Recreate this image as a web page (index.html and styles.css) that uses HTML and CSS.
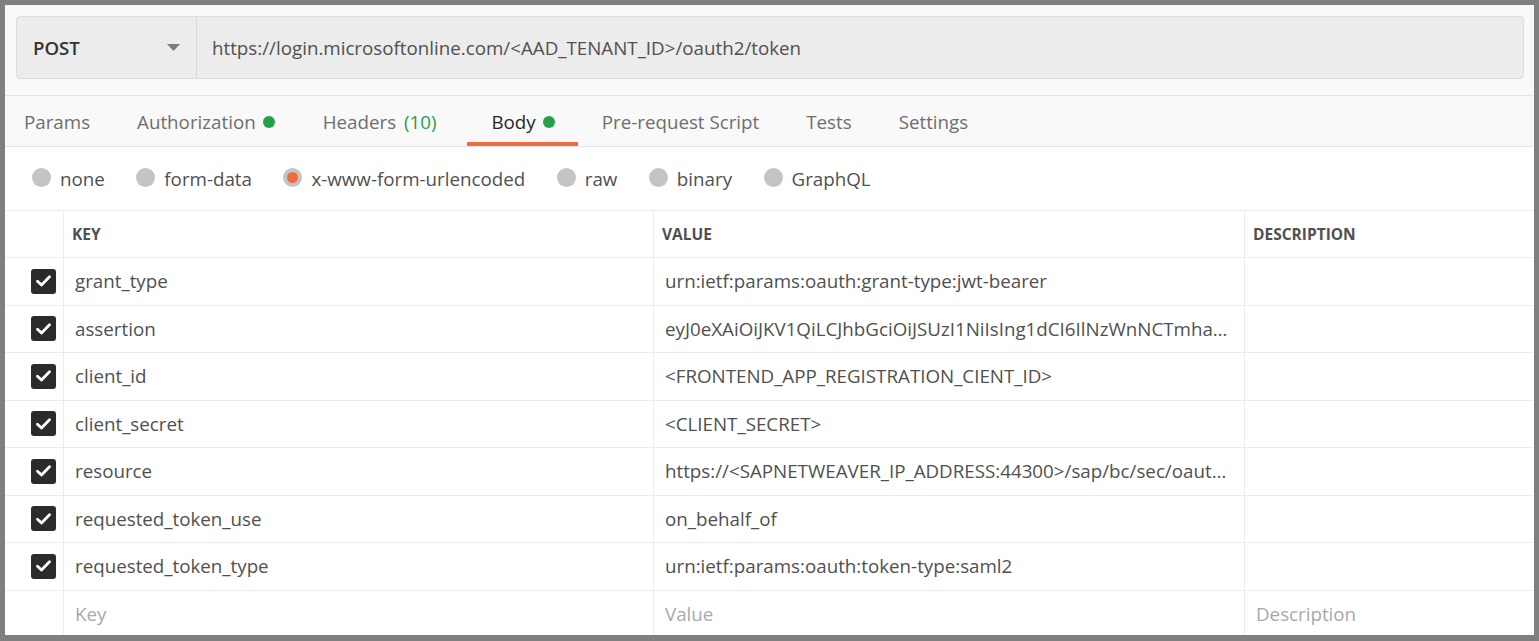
FILE: index.html
```html
<!DOCTYPE html>
<html>
<head>
<meta charset="utf-8">
<link rel="stylesheet" href="styles.css">
</head>
<body>
<div class="window">
  <div class="top">
    <div class="urlbar">
      <div class="method">
        <span class="method-name">POST</span>
        <svg class="caret" width="13" height="7" viewBox="0 0 13 7"><path d="M0 0H13L6.5 7Z" fill="#7b7b7b"/></svg>
      </div>
      <div class="url">https://login.microsoftonline.com/&lt;AAD_TENANT_ID&gt;/oauth2/token</div>
    </div>
  </div>
  <div class="tabs">
    <div class="tab">Params</div>
    <div class="tab">Authorization<span class="dot"></span></div>
    <div class="tab tab-headers">Headers <span class="count">(10)</span></div>
    <div class="tab active">Body<span class="dot"></span></div>
    <div class="tab">Pre-request Script</div>
    <div class="tab">Tests</div>
    <div class="tab">Settings</div>
  </div>
  <div class="radios">
    <label class="radio"><span class="circle"></span>none</label>
    <label class="radio"><span class="circle"></span>form-data</label>
    <label class="radio"><span class="circle selected"></span>x-www-form-urlencoded</label>
    <label class="radio"><span class="circle"></span>raw</label>
    <label class="radio"><span class="circle"></span>binary</label>
    <label class="radio"><span class="circle"></span>GraphQL</label>
  </div>
  <div class="table">
    <div class="row head">
      <div class="cell chk"></div>
      <div class="cell">KEY</div>
      <div class="cell">VALUE</div>
      <div class="cell">DESCRIPTION</div>
    </div>
    <div class="row">
      <div class="cell chk"><span class="box"><svg width="15" height="12" viewBox="0 0 15 12"><path d="M1.5 6.2L5.5 10L13.5 1.8" fill="none" stroke="#fff" stroke-width="2.8" stroke-linecap="round" stroke-linejoin="round"/></svg></span></div>
      <div class="cell">grant_type</div>
      <div class="cell">urn:ietf:params:oauth:grant-type:jwt-bearer</div>
      <div class="cell"></div>
    </div>
    <div class="row">
      <div class="cell chk"><span class="box"><svg width="15" height="12" viewBox="0 0 15 12"><path d="M1.5 6.2L5.5 10L13.5 1.8" fill="none" stroke="#fff" stroke-width="2.8" stroke-linecap="round" stroke-linejoin="round"/></svg></span></div>
      <div class="cell">assertion</div>
      <div class="cell">eyJ0eXAiOiJKV1QiLCJhbGciOiJSUzI1NiIsIng1dCI6IlNzWnNCTmhaTmNfMkdNbjY0clhzQXlDUVlSVSIsImtpZCI6IlNzWnNCTmhaY</div>
      <div class="cell"></div>
    </div>
    <div class="row">
      <div class="cell chk"><span class="box"><svg width="15" height="12" viewBox="0 0 15 12"><path d="M1.5 6.2L5.5 10L13.5 1.8" fill="none" stroke="#fff" stroke-width="2.8" stroke-linecap="round" stroke-linejoin="round"/></svg></span></div>
      <div class="cell">client_id</div>
      <div class="cell">&lt;FRONTEND_APP_REGISTRATION_CIENT_ID&gt;</div>
      <div class="cell"></div>
    </div>
    <div class="row">
      <div class="cell chk"><span class="box"><svg width="15" height="12" viewBox="0 0 15 12"><path d="M1.5 6.2L5.5 10L13.5 1.8" fill="none" stroke="#fff" stroke-width="2.8" stroke-linecap="round" stroke-linejoin="round"/></svg></span></div>
      <div class="cell">client_secret</div>
      <div class="cell">&lt;CLIENT_SECRET&gt;</div>
      <div class="cell"></div>
    </div>
    <div class="row">
      <div class="cell chk"><span class="box"><svg width="15" height="12" viewBox="0 0 15 12"><path d="M1.5 6.2L5.5 10L13.5 1.8" fill="none" stroke="#fff" stroke-width="2.8" stroke-linecap="round" stroke-linejoin="round"/></svg></span></div>
      <div class="cell">resource</div>
      <div class="cell">https://&lt;SAPNETWEAVER_IP_ADDRESS:44300&gt;/sap/bc/sec/oauth2/token</div>
      <div class="cell"></div>
    </div>
    <div class="row">
      <div class="cell chk"><span class="box"><svg width="15" height="12" viewBox="0 0 15 12"><path d="M1.5 6.2L5.5 10L13.5 1.8" fill="none" stroke="#fff" stroke-width="2.8" stroke-linecap="round" stroke-linejoin="round"/></svg></span></div>
      <div class="cell">requested_token_use</div>
      <div class="cell">on_behalf_of</div>
      <div class="cell"></div>
    </div>
    <div class="row">
      <div class="cell chk"><span class="box"><svg width="15" height="12" viewBox="0 0 15 12"><path d="M1.5 6.2L5.5 10L13.5 1.8" fill="none" stroke="#fff" stroke-width="2.8" stroke-linecap="round" stroke-linejoin="round"/></svg></span></div>
      <div class="cell">requested_token_type</div>
      <div class="cell">urn:ietf:params:oauth:token-type:saml2</div>
      <div class="cell"></div>
    </div>
    <div class="row last">
      <div class="cell chk"></div>
      <div class="cell ph">Key</div>
      <div class="cell ph">Value</div>
      <div class="cell ph">Description</div>
    </div>
  </div>
</div>
</body>
</html>
```

FILE: styles.css
```css
html, body {
  margin: 0;
  padding: 0;
  background: #7f7f7f;
  overflow: hidden;
}
body {
  font-family: "Open Sans", "Noto Sans", sans-serif;
  color: #505050;
}
.window {
  margin: 5px 5px 0 5px;
  height: 630px;
  background: #ffffff;
  overflow: hidden;
}
.top {
  background: #f9f9f9;
  padding: 11px 10px 16px 11px;
  border-bottom: 1px solid #e6e6e6;
}
.urlbar {
  display: flex;
  height: 63px;
  box-sizing: border-box;
  border: 1px solid #dcdcdc;
  border-radius: 4px;
  background: #ececec;
}
.method {
  width: 180px;
  box-sizing: border-box;
  display: flex;
  align-items: center;
  justify-content: space-between;
  padding: 0 16px 0 16px;
  border-right: 1px solid #d9d9d9;
}
.method-name {
  font-size: 18.6px;
  font-weight: 600;
  color: #333;
}
.caret {
  display: block;
}
.url {
  display: flex;
  align-items: center;
  padding-left: 15px;
  font-size: 18.75px;
  color: #505050;
}
.tabs {
  display: flex;
  height: 50px;
  background: #f9f9f9;
  border-bottom: 1px solid #e6e6e6;
}
.tab {
  position: relative;
  display: flex;
  align-items: center;
  padding: 0 23px 0 24px;
  font-size: 18.75px;
  color: #6e6e6e;
  white-space: pre;
}
.tab:first-child { padding-left: 19px; }
.tab.tab-headers { padding-left: 25px; padding-right: 31px; }
.tab.active {
  color: #282828;
}
.tab.active::after {
  content: "";
  position: absolute;
  left: 0;
  right: 0;
  bottom: 0;
  height: 4px;
  background: #f26b3a;
}
.dot {
  display: inline-block;
  width: 12px;
  height: 12px;
  border-radius: 50%;
  background: #26a148;
  margin-left: 7px;
  margin-top: 2px;
}
.count {
  color: #26a148;
  margin-left: 3px;
}
.radios {
  display: flex;
  align-items: center;
  height: 63px;
  padding-left: 27px;
  gap: 31.5px;
}
.radio {
  display: flex;
  align-items: center;
  font-size: 18.75px;
  color: #505050;
  gap: 9px;
}
.circle {
  width: 19px;
  height: 19px;
  box-sizing: border-box;
  border-radius: 50%;
  background: #c4c4c4;
  margin-top: -2px;
}
.circle.selected {
  background: #f26b3a;
  border: 4.5px solid #c4c4c4;
}
.table {
  border-top: 1px solid #ececec;
}
.row {
  display: grid;
  grid-template-columns: 58px 590px 591px 1fr;
  height: 47.5px;
  box-sizing: border-box;
  border-bottom: 1px solid #ececec;
}
.row.head {
  height: 47px;
}
.row.last {
  border-bottom: none;
}
.cell {
  display: flex;
  align-items: center;
  padding: 0 12px 0 11px;
  font-size: 18.75px;
  color: #505050;
  border-left: 1px solid #ececec;
  white-space: nowrap;
  overflow: hidden;
  min-width: 0;
}
.cell:not(.chk) {
  display: block;
  line-height: 46px;
  text-overflow: ellipsis;
}
.head .cell {
  font-size: 15.5px;
  font-weight: 700;
  color: #505050;
  padding-left: 8px;
}
.cell.chk {
  border-left: none;
  justify-content: flex-end;
  padding: 0 7px 0 0;
}
.box {
  width: 25px;
  height: 25px;
  border-radius: 3px;
  background: #2b2b2b;
  display: flex;
  align-items: center;
  justify-content: center;
}
.box svg { display: block; }
.cell.ph {
  color: #a9a9a9;
}
```
